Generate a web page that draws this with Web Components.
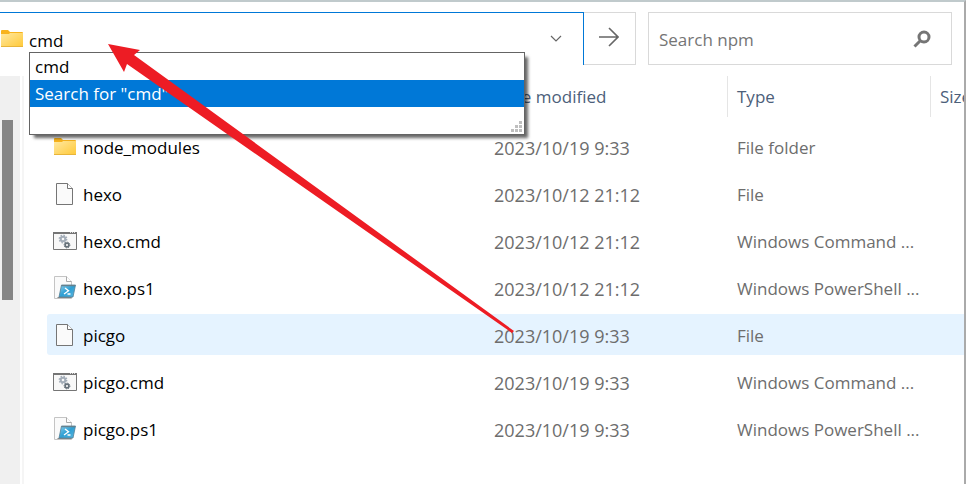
<!DOCTYPE html>
<html lang="en">
<head>
<meta charset="utf-8">
<title>npm</title>
<style>
  body { margin: 0; background: #fff; font: 17px/24px "Segoe UI", "Open Sans", "Noto Sans", sans-serif; color: #000; }
</style>
</head>
<body>
<explorer-window>
  <address-bar slot="toolbar" value="cmd"></address-bar>
  <search-box slot="toolbar" placeholder="Search npm"></search-box>
  <nav-pane slot="side"></nav-pane>
  <file-list slot="main"></file-list>
</explorer-window>
<script>
const ICONS = {
  folder: `<svg width="24" height="24" viewBox="0 0 24 24"><defs><linearGradient id="g" x1="0" y1="0" x2="1" y2="1"><stop offset="0" stop-color="#ffe8a0"/><stop offset="1" stop-color="#ffc938"/></linearGradient></defs><path d="M1 4q0-1 1-1h6l2 2h12q1 0 1 1v4H1z" fill="#f8b31c"/><path d="M1 7h8l1-1h13v13q0 1-1 1H2q-1 0-1-1z" fill="url(#g)"/><path d="M1 19.5h22" stroke="#e8b53a"/></svg>`,
  file: `<svg width="24" height="24" viewBox="0 0 24 24"><path d="M3.500 1.500h11l5 5v16h-16z" fill="#fafafa" stroke="#757575"/><path d="M14.500 1.500v5h5" fill="#fff" stroke="#757575"/></svg>`,
  cmd: `<svg width="24" height="24" viewBox="0 0 24 24"><path d="M.5 3.500h23v17H.5z" fill="#f8f8f8" stroke="#757575"/><path d="M0 4h24" stroke="#757575" stroke-width="2"/><path d="M17 3.500h6" stroke="#ddd" stroke-dasharray="1 1"/><circle cx="10" cy="10" r="2.300" fill="none" stroke="#a3adb8" stroke-width="2"/><circle cx="10" cy="10" r="3.700" fill="none" stroke="#a3adb8" stroke-width="1.400" stroke-dasharray="1.500 1.400"/><circle cx="14" cy="16" r="1.900" fill="none" stroke="#66717a" stroke-width="1.600"/><circle cx="14" cy="16" r="2.900" fill="none" stroke="#66717a" stroke-dasharray="1.200 1.080"/></svg>`,
  ps: `<svg width="24" height="24" viewBox="0 0 24 24"><defs><linearGradient id="p" x1="0" y1="0" x2="1" y2="1"><stop offset="0" stop-color="#8acfee"/><stop offset=".5" stop-color="#2f9fd3"/><stop offset="1" stop-color="#5cb6df"/></linearGradient></defs><path d="M1.500.5h12l5 5v17h-17z" fill="#fafafa" stroke="#c4c4c4"/><path d="M13.500.5v5h5" fill="#fff" stroke="#aaa"/><path d="M4.500 21.500h14" stroke="#888"/><path d="M8.500 9h14l-2.500 12H6z" fill="url(#p)" stroke="#527f96" stroke-width=".8"/><path d="M8.500 9.700h13.500" stroke="#66808c" stroke-width="1.200"/><path d="M12 12l3.500 2.800L11 18M14.500 18h3" fill="none" stroke="#fff" stroke-width="1.400"/></svg>`
};

class Base extends HTMLElement {
  constructor() { super(); this.attachShadow({ mode: "open" }); }
  connectedCallback() { this.shadowRoot.innerHTML = this.render(); }
}

customElements.define("file-icon", class extends Base {
  render() {
    return `<style>:host{display:block;flex:none;width:24px;height:24px}svg{display:block}</style>${ICONS[this.getAttribute("kind")]}`;
  }
});

customElements.define("suggest-list", class extends Base {
  render() {
    return `<style>
      :host{display:block;box-sizing:border-box;border:1px solid #646464;background:#fff;height:83px;box-shadow:4px 4px 3px -1px rgba(0,0,0,.6)}
      ul{list-style:none;margin:0;padding:0}
      li{padding:2px 5px 1px;line-height:24px}
      li[aria-selected=true]{background:#0078d7;color:#fff}
      svg{position:absolute;right:2px;bottom:2px}
    </style>
    <ul role="listbox" aria-label="Suggestions"><li role="option" aria-selected="false">cmd</li><li role="option" aria-selected="true">Search for "cmd"</li></ul>
    <svg width="11" height="11" fill="#bfbfbf"><path d="M8 0h3v3H8zM4 4h3v3H4zM8 4h3v3H8zM0 8h3v3H0zM4 8h3v3H4zM8 8h3v3H8z"/></svg>`;
  }
});

customElements.define("address-bar", class extends Base {
  render() {
    return `<style>
      :host{display:flex;flex:1;min-width:0;height:53px;position:relative}
      .field{flex:1;min-width:0;display:flex;align-items:center;border-top:1px solid #0078d7;border-right:1px solid #0078d7}
      input{flex:1;min-width:0;font:inherit;color:inherit;border:0;outline:0;background:none;padding:2px 5px 0;height:32px}
      button{border:0;background:none;padding:0;display:grid;place-items:center}
      .drop{width:54px;height:52px}
      .go{box-sizing:border-box;width:52px;border:1px solid #d9d9d9;border-left:0;padding:0 2px 4px 0}
      svg{fill:none;stroke:#666}
      suggest-list{position:absolute;left:29px;right:111px;top:40px;z-index:2}
    </style>
    <div class="field"><file-icon kind="folder"></file-icon>
      <input aria-label="Address" value="${this.getAttribute("value")}">
      <button class="drop" aria-label="Previous locations"><svg width="12" height="8" stroke-width="1.200"><path d="M1 1l5 5 5-5"/></svg></button></div>
    <button class="go" aria-label="Go"><svg width="20" height="20" stroke-width="1.600"><path d="M0 10h19M10 1l9 9-9 9"/></svg></button>
    <suggest-list></suggest-list>`;
  }
});

customElements.define("search-box", class extends Base {
  render() {
    return `<style>
      :host{display:flex;align-items:center;box-sizing:border-box;width:304px;height:53px;border:1px solid #d9d9d9;padding:0 20px 0 10px}
      input{flex:1;min-width:0;font:inherit;border:0;outline:0;padding:2px 0 0;height:32px;background:none}
      input::placeholder{color:#757575;opacity:1}
      button{border:0;background:none;padding:0;display:grid}
    </style>
    <input type="search" aria-label="Search" placeholder="${this.getAttribute("placeholder")}">
    <button aria-label="Search"><svg width="18" height="18" fill="none" stroke="#757575"><circle cx="11" cy="7" r="5" stroke-width="3"/><path d="M7.500 10.500L1.500 16.500" stroke-width="3"/></svg></button>`;
  }
});

customElements.define("nav-pane", class extends Base {
  render() {
    return `<style>
      :host{display:block;flex:none;box-sizing:border-box;width:24px;border-right:2px solid #f5f5f5;background:linear-gradient(90deg,#f0f0f0 20px,#fff 20px)}
      .thumb{width:11px;height:180px;margin:44px 0 0 2px;background:#858585}
    </style><div class="thumb"></div>`;
  }
});

customElements.define("file-list", class extends Base {
  render() {
    const rows = [
      ["folder", "node_modules", "2023/10/19 9:33", "File folder"],
      ["file", "hexo", "2023/10/12 21:12", "File"],
      ["cmd", "hexo.cmd", "2023/10/12 21:12", "Windows Command ..."],
      ["ps", "hexo.ps1", "2023/10/12 21:12", "Windows PowerShell ..."],
      ["file", "picgo", "2023/10/19 9:33", "File"],
      ["cmd", "picgo.cmd", "2023/10/19 9:33", "Windows Command ..."],
      ["ps", "picgo.ps1", "2023/10/19 9:33", "Windows PowerShell ..."]
    ];
    return `<style>
      :host{display:block;flex:1;min-width:0;padding-left:23px}
      table{width:100%;table-layout:fixed;border-spacing:0;text-align:left}
      th{font-weight:400;color:#4c607a;border-left:1px solid #e5e5e5;height:41px}
      th,td{padding:1px 0 0 9px;box-sizing:border-box;overflow:hidden;white-space:nowrap}
      .date{width:243px}.type{width:203px}.size{width:34px}
      tbody td{height:41px;padding:3px 0 0 10px;color:#6d6d6d}
      tbody td:nth-child(2){font-size:18px}
      tbody td:first-child{color:#000;padding:0 0 0 6px;border-radius:3px 0 0 3px}
      tr.gap td:first-child{height:6px;padding:0}
      thead tr.gap td:first-child{height:9px}
      tr.on td{background:#e5f3ff}
      .name{display:flex;align-items:center;gap:6px}
      .name span{padding-top:3px}
    </style>
    <table><thead><tr><td></td><th class="date" scope="col">Date modified</th><th class="type" scope="col">Type</th><th class="size" scope="col">Size</th></tr><tr class="gap"><td colspan="4"></td></tr></thead>
    <tbody>${rows.map(([k, n, d, t]) => `<tr${n === "picgo" ? ' class="on"' : ""}><td><div class="name"><file-icon kind="${k}"></file-icon><span>${n}</span></div></td><td>${d}</td><td>${t}</td><td></td></tr>`).join('<tr class="gap"><td colspan="4"></td></tr>')}</tbody></table>`;
  }
});

customElements.define("pointer-arrow", class extends Base {
  render() {
    return `<style>:host{position:absolute;left:108px;top:42px;z-index:3;pointer-events:none}svg{display:block}</style>
    <svg width="408" height="290" fill="#ed1c24"><path d="M0 0L32 6 26 11 406 287 404 289 19 20 16 28z"/></svg>`;
  }
});

customElements.define("explorer-window", class extends Base {
  render() {
    return `<style>
      :host{display:flex;flex-direction:column;box-sizing:border-box;min-height:100vh;position:relative;border-top:2px solid #c0cacc;border-right:2px solid #aaa;overflow:hidden}
      header{display:flex;gap:12px;padding:10px 12px 11px 0}
      main{display:flex;flex:1}
    </style><header><slot name="toolbar"></slot></header><main><slot name="side"></slot><slot name="main"></slot></main><pointer-arrow></pointer-arrow>`;
  }
});
</script>
</body>
</html>
